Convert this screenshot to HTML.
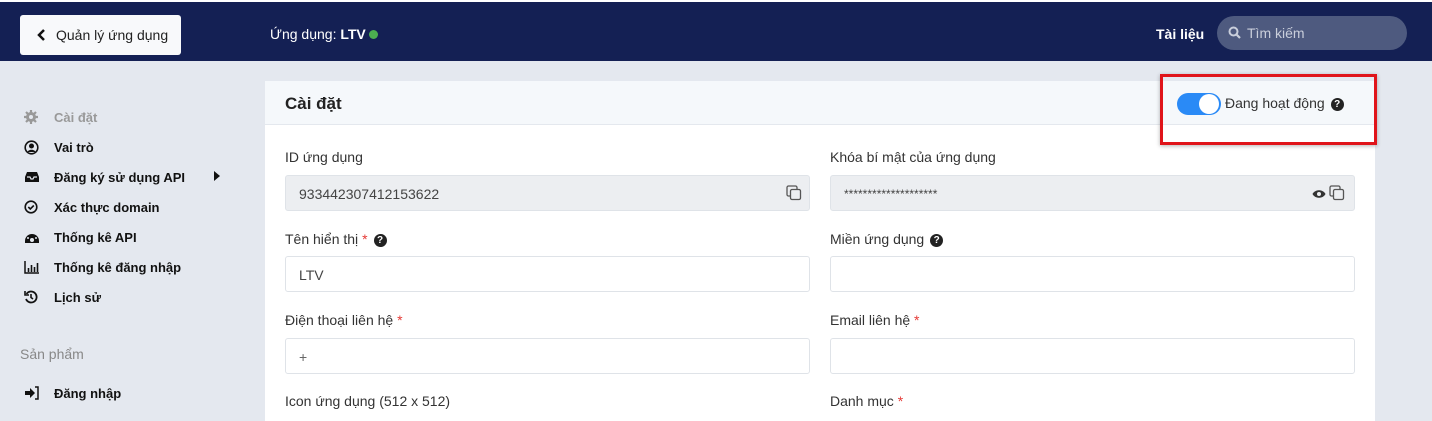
<!DOCTYPE html>
<html><head><meta charset="utf-8"><style>
*{box-sizing:border-box;margin:0;padding:0}
body{width:1432px;height:418px;overflow:hidden;background:#e4e8ef;font-family:"Liberation Sans",sans-serif;color:#222;position:relative;font-size:14px}
.top{position:absolute;left:0;top:0;width:1432px;height:61px;background:#142054;border-top:2px solid #fff}
.back{position:absolute;left:20px;top:13px;width:161px;height:40px;background:#f8f9fb;border-radius:3px;font-size:14px;color:#222;line-height:40px;padding-left:36px}
.back svg{position:absolute;left:16px;top:14px}
.app{position:absolute;left:270px;top:24px;color:#fff;font-size:14px}
.dot{display:inline-block;width:9px;height:9px;border-radius:50%;background:#4caf50;margin-left:3px}
.doc{position:absolute;left:1156px;top:24px;color:#fff;font-weight:bold;font-size:14px}
.search{position:absolute;left:1217px;top:14px;width:190px;height:34px;border-radius:17px;background:#4e5a7f;color:#c9cedb;font-size:14px;line-height:34px;padding-left:30px}
.search svg{position:absolute;left:11px;top:10px}
.side{position:absolute;left:24px;font-size:13px;font-weight:bold;color:#111}
.side svg{position:absolute;left:0;top:0}
.side span{position:absolute;left:30px;top:0;white-space:nowrap}
.card{position:absolute;left:265px;top:81px;width:1110px;height:340px;background:#fff}
.ch{height:44px;background:#f5f8fb;border-bottom:1px solid #e4e8ee;font-size:17px;font-weight:bold;padding:13px 0 0 20px}
.lbl{position:absolute;font-size:14px;color:#333}
.req{color:#e53935}
.inp{position:absolute;width:525px;height:36px;border:1px solid #dfe3e8;border-radius:3px;background:#fff;font-size:14px;color:#444;padding:10px 0 0 13px}
.dis{background:#eceef1}
.q{display:inline-block;width:13px;height:13px;border-radius:50%;background:#222;color:#fff;font-size:10px;font-weight:bold;text-align:center;line-height:13px;vertical-align:1px;margin-left:6px}
</style></head><body>
<div class="top">
<div class="back"><svg width="10" height="12" viewBox="0 0 10 12"><path d="M8 1L3 6l5 5" stroke="#111" stroke-width="2.5" fill="none"/></svg>Quản lý ứng dụng</div>
<div class="app">Ứng dụng: <b>LTV</b><span class="dot"></span></div>
<div class="doc">Tài liệu</div>
<div class="search"><svg width="13" height="13" viewBox="0 0 13 13"><circle cx="5.5" cy="5.5" r="4" stroke="#c9cedb" stroke-width="2" fill="none"/><path d="M8.5 8.5l3.5 3.5" stroke="#c9cedb" stroke-width="2.2"/></svg>Tìm kiếm</div>
</div>

<div class="side" style="top:110px;color:#999"><svg width="14" height="14" viewBox="0 0 14 14"><circle cx="7" cy="7" r="5" fill="#999"/><circle cx="7" cy="7" r="2" fill="#e4e8ef"/><path d="M7 0v3M7 11v3M0 7h3M11 7h3M2 2l2 2M10 10l2 2M2 12l2-2M10 4l2-2" stroke="#999" stroke-width="2.2"/></svg><span>Cài đặt</span></div>
<div class="side" style="top:140px"><svg width="15" height="15" viewBox="0 0 15 15"><circle cx="7.5" cy="7.5" r="6.3" stroke="#111" stroke-width="1.6" fill="none"/><circle cx="7.5" cy="6" r="2.5" fill="#111"/><path d="M3.5 12c1-3 7-3 8 0z" fill="#111"/></svg><span>Vai trò</span></div>
<div class="side" style="top:170px"><svg width="16" height="14" viewBox="0 0 16 14"><path d="M1 7l2-5h10l2 5v5H1z" fill="#111"/><path d="M3 7h3l1 2h2l1-2h3" stroke="#e4e8ef" stroke-width="1.2" fill="none"/></svg><span>Đăng ký sử dụng API</span></div>
<svg style="position:absolute;left:214px;top:171px" width="6" height="10"><path d="M0 0l6 5-6 5z" fill="#111"/></svg>
<div class="side" style="top:200px"><svg width="14" height="14" viewBox="0 0 14 14"><circle cx="7" cy="7" r="5.8" stroke="#111" stroke-width="1.6" fill="none"/><path d="M4.3 7l2 2 3.5-3.5" stroke="#111" stroke-width="1.6" fill="none"/></svg><span>Xác thực domain</span></div>
<div class="side" style="top:230px"><svg width="16" height="14" viewBox="0 0 16 14"><path d="M1 11a7 7 0 0 1 14 0v2H1z" fill="#111"/><circle cx="8" cy="10" r="2" fill="#e4e8ef"/><circle cx="4" cy="8" r="1" fill="#e4e8ef"/><circle cx="12" cy="8" r="1" fill="#e4e8ef"/></svg><span>Thống kê API</span></div>
<div class="side" style="top:260px"><svg width="16" height="14" viewBox="0 0 16 14"><path d="M1 1v12h14" stroke="#111" stroke-width="1.5" fill="none"/><path d="M4.5 8v4M7.5 5v7M10.5 7v5M13.5 3v9" stroke="#111" stroke-width="1.6"/></svg><span>Thống kê đăng nhập</span></div>
<div class="side" style="top:290px"><svg width="14" height="14" viewBox="0 0 14 14"><path d="M2.5 4A5.5 5.5 0 1 1 2 9" stroke="#111" stroke-width="1.8" fill="none"/><path d="M1 1v4h4" stroke="#111" stroke-width="1.6" fill="none"/><path d="M7 4v3.5l2 1.5" stroke="#111" stroke-width="1.6" fill="none"/></svg><span>Lịch sử</span></div>
<div style="position:absolute;left:20px;top:346px;color:#888;font-size:14px">Sản phẩm</div>
<div class="side" style="top:386px"><svg width="16" height="14" viewBox="0 0 16 14"><path d="M1 5h5V2l5 5-5 5V9H1z" fill="#111"/><path d="M11 1h3v12h-3" stroke="#111" stroke-width="1.5" fill="none"/></svg><span>Đăng nhập</span></div>

<div class="card">
<div class="ch">Cài đặt</div>
<div style="position:absolute;left:912px;top:12px;width:44px;height:22px;border-radius:11px;background:#2a8af6"></div>
<div style="position:absolute;left:934px;top:13px;width:20px;height:20px;border-radius:50%;background:#fff"></div>
<div style="position:absolute;left:960px;top:14px;font-size:14px;color:#333">Đang hoạt động<span class="q">?</span></div>
<div class="lbl" style="left:20px;top:68px">ID ứng dụng</div>
<div class="inp dis" style="left:20px;top:94px">933442307412153622</div>
<div class="lbl" style="left:565px;top:68px">Khóa bí mật của ứng dụng</div>
<div class="inp dis" style="left:565px;top:94px;font-size:12px;padding-top:11px">********************</div>
<svg style="position:absolute;left:521px;top:104px" width="16" height="16" viewBox="0 0 16 16"><rect x="1" y="1" width="10" height="10" rx="1.5" stroke="#555" stroke-width="1.3" fill="none"/><rect x="4.5" y="4.5" width="10" height="10" rx="1.5" stroke="#555" stroke-width="1.3" fill="#eceef1"/></svg>
<svg style="position:absolute;left:1047px;top:108px" width="14" height="10" viewBox="0 0 14 10"><path d="M0.5 5C3 0 11 0 13.5 5 11 10 3 10 0.5 5z" fill="#333"/><circle cx="7" cy="5" r="2" fill="#eceef1"/></svg>
<svg style="position:absolute;left:1064px;top:104px" width="16" height="16" viewBox="0 0 16 16"><rect x="1" y="1" width="10" height="10" rx="1.5" stroke="#555" stroke-width="1.3" fill="none"/><rect x="4.5" y="4.5" width="10" height="10" rx="1.5" stroke="#555" stroke-width="1.3" fill="#eceef1"/></svg>
<div class="lbl" style="left:20px;top:150px">Tên hiển thị <span class="req">*</span><span class="q">?</span></div>
<div class="inp" style="left:20px;top:175px">LTV</div>
<div class="lbl" style="left:565px;top:150px">Miền ứng dụng<span class="q">?</span></div>
<div class="inp" style="left:565px;top:175px"></div>
<div class="lbl" style="left:20px;top:231px">Điện thoại liên hệ <span class="req">*</span></div>
<div class="inp" style="left:20px;top:257px;color:#666">+</div>
<div class="lbl" style="left:565px;top:231px">Email liên hệ <span class="req">*</span></div>
<div class="inp" style="left:565px;top:257px"></div>
<div class="lbl" style="left:20px;top:312px">Icon ứng dụng (512 x 512)</div>
<div class="lbl" style="left:565px;top:312px">Danh mục <span class="req">*</span></div>
</div>
<div style="position:absolute;left:1160px;top:74px;width:217px;height:71px;border:3px solid #e0141a;box-shadow:0 1px 4px rgba(0,0,0,.3)"></div>
</body></html>
